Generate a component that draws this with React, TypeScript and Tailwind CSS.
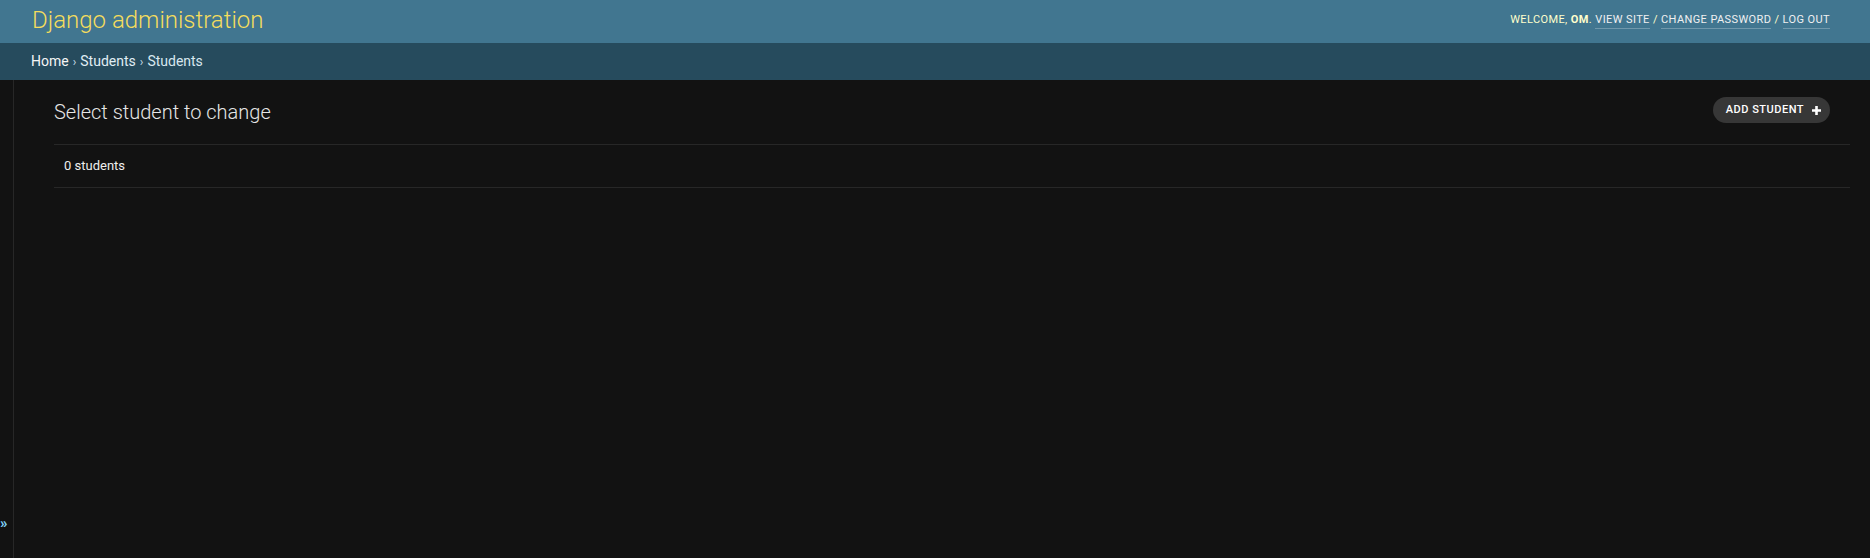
const USER_LINKS = ["View site", "Change password", "Log out"];

function PlusIcon() {
  return (
    <svg width="11" height="11" viewBox="0 0 11 11" className="shrink-0">
      <path d="M5.5 1v9M1 5.5h9" stroke="#fff" strokeWidth="2.6" />
    </svg>
  );
}

export default function App() {
  return (
    <div className="min-h-screen flex flex-col bg-[#121212] font-['Roboto','Liberation_Sans',sans-serif] text-[#eeeeee]">
      {/* Header */}
      <header className="h-[43px] shrink-0 flex items-center justify-between bg-[#417690] pl-8 pr-10">
        <h1 className="text-[24px] font-light leading-none text-[#f5dd5d] -mt-[4px]">
          Django administration
        </h1>
        <div className="text-[11px] leading-[13px] uppercase tracking-[0.4px] text-[#ffffcc] -mt-[4px] whitespace-pre">
          {"Welcome, "}
          <strong className="font-bold">Om</strong>
          {". "}
          {USER_LINKS.map((l, i) => (
            <span key={l}>
              {i > 0 && " / "}
              <a href="#" className="text-[#f0f0f0] border-b border-white/25 pb-[2px]">
                {l}
              </a>
            </span>
          ))}
        </div>
      </header>

      {/* Breadcrumbs */}
      <nav className="h-[37px] shrink-0 flex items-center bg-[#264b5d] pl-[31px] text-[14px] text-[#c4dce8]">
        <a href="#" className="text-[#f5f5f5]">Home</a>
        <span className="mx-[4px] text-[12px]">›</span>
        <a href="#" className="text-[#e0eef5]">Students</a>
        <span className="mx-[4px] text-[12px]">›</span>
        <span className="text-[#d8e8f0]">Students</span>
      </nav>

      {/* Main */}
      <main className="flex-1 flex">
        <div className="w-[14px] shrink-0 flex items-end border-r border-[#272727] pb-[27px]">
          <span className="text-[15px] leading-[15px] font-bold text-[#81d4fa]">»</span>
        </div>

        <div className="flex-1 pl-10 pr-5">
          <div className="flex items-start justify-between h-[64px]">
            <h2 className="mt-[20px] text-[20px] leading-[24px] font-light text-[#e6e6e6]">
              Select student to change
            </h2>
            <a
              href="#"
              className="mt-[17px] mr-5 h-[26px] flex items-center gap-[7px] rounded-full bg-[#373737] pl-[13px] pr-[8px] text-[11px] font-medium uppercase tracking-[0.5px] text-white"
            >
              Add student
              <PlusIcon />
            </a>
          </div>
          <div className="h-[44px] flex items-center border-y border-[#272727] pl-[10px] text-[13px]">
            0 students
          </div>
        </div>
      </main>
    </div>
  );
}
